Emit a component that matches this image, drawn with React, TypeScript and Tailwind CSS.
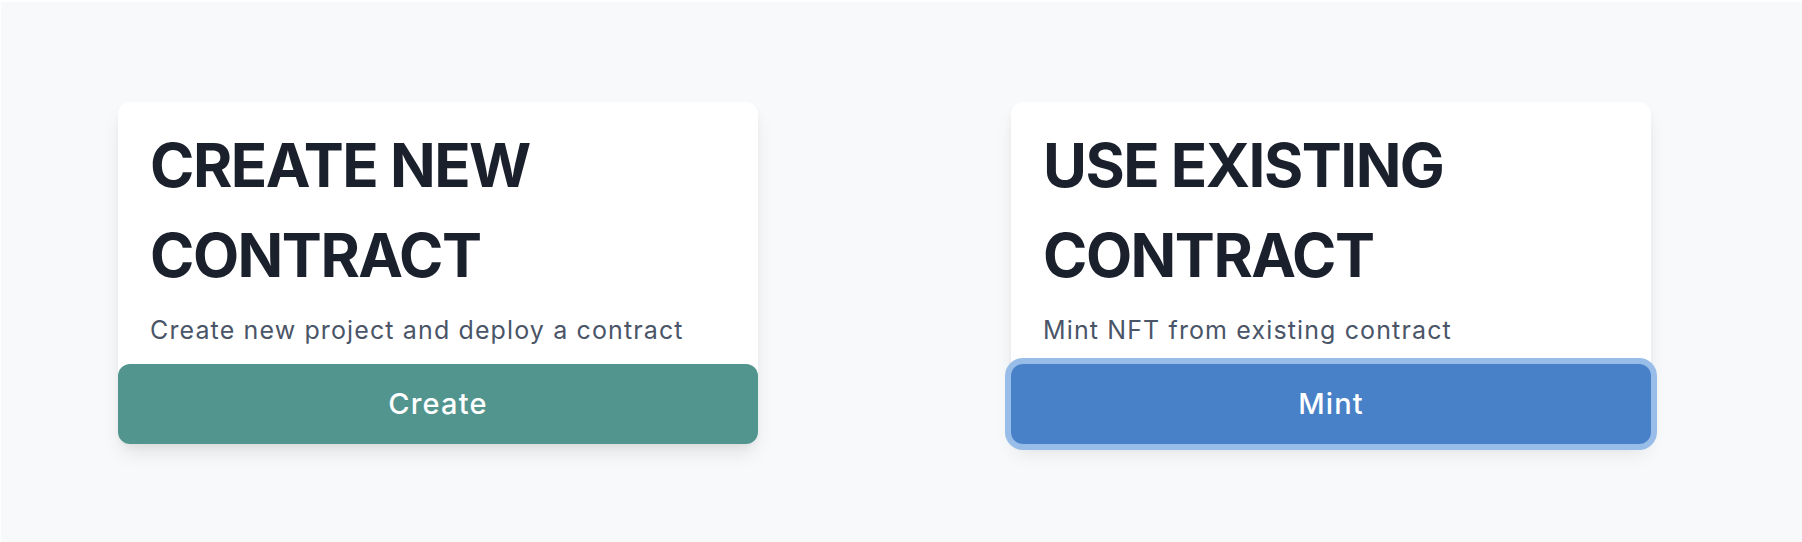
import React from "react";

interface ChoiceCardProps {
  title: string;
  description: string;
  action: string;
  tone: "teal" | "blue";
  focused?: boolean;
}

const BUTTON_TONE: Record<string, string> = {
  teal: "bg-[#52958f]",
  blue: "bg-[#4881c8]",
};

function ChoiceCard({ title, description, action, tone, focused }: ChoiceCardProps) {
  return (
    <div className="w-[640px] rounded-xl bg-white shadow-[0_12px_20px_-4px_rgba(0,0,0,0.1),0_4px_8px_-2px_rgba(0,0,0,0.05)] flex flex-col">
      <div className="px-8 pt-[18px]">
        <h2 className="text-[60px] leading-[90px] font-bold tracking-[-0.025em] text-[#1a202c]">{title}</h2>
        <p className="mt-[14px] text-[25px] leading-8 tracking-[0.045em] text-[#4a5568]">{description}</p>
      </div>
      <button
        type="button"
        className={`mt-[18px] h-20 w-full rounded-xl text-[29px] font-medium tracking-[0.04em] text-white ${BUTTON_TONE[tone]} ${
          focused ? "ring-[6px] ring-[#97bde8]" : ""
        }`}
      >
        {action}
      </button>
    </div>
  );
}

export default function App() {
  return (
    <div
      className="min-h-[542px] w-full bg-[#f8f9fa] border-t-2 border-l border-white"
      style={{ fontFamily: "Inter, 'Noto Sans', sans-serif" }}
    >
      <div className="flex items-start pt-[100px] pl-[117px] gap-[253px]">
        <ChoiceCard
          title="CREATE NEW CONTRACT"
          description="Create new project and deploy a contract"
          action="Create"
          tone="teal"
        />
        <ChoiceCard
          title="USE EXISTING CONTRACT"
          description="Mint NFT from existing contract"
          action="Mint"
          tone="blue"
          focused
        />
      </div>
    </div>
  );
}
